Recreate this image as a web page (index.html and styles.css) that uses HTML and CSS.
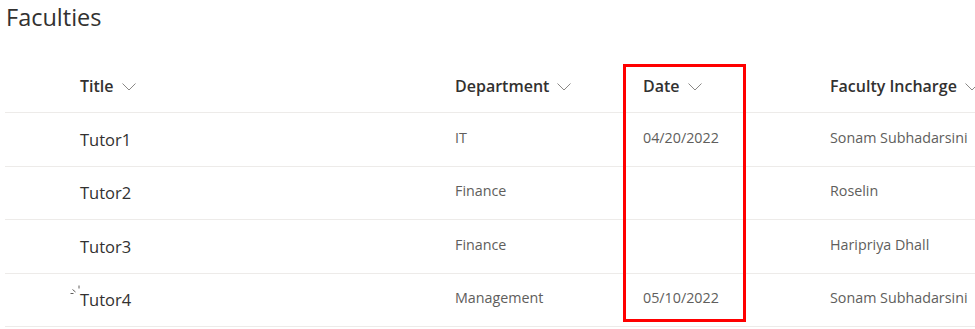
FILE: index.html
```html
<!DOCTYPE html>
<html lang="en">
<head>
    <meta charset="UTF-8">
    <meta name="viewport" content="width=device-width, initial-scale=1.0">
    <title>Faculties</title>
    <link rel="stylesheet" href="styles.css">
</head>
<body>
    <div class="page">
        <h1 class="list-title">Faculties</h1>
        <div class="list">
            <div class="row header">
                <span></span>
                <div class="col-head">Title <svg class="chev" viewBox="0 0 14 8"><path d="M0.5 0.5 L7 7 L13.5 0.5"/></svg></div>
                <div class="col-head">Department <svg class="chev" viewBox="0 0 14 8"><path d="M0.5 0.5 L7 7 L13.5 0.5"/></svg></div>
                <div class="col-head">Date <svg class="chev" viewBox="0 0 14 8"><path d="M0.5 0.5 L7 7 L13.5 0.5"/></svg></div>
                <div class="col-head">Faculty Incharge <svg class="chev" viewBox="0 0 14 8"><path d="M0.5 0.5 L7 7 L13.5 0.5"/></svg></div>
            </div>
            <div class="row">
                <span></span>
                <div class="cell title">Tutor1</div>
                <div class="cell">IT</div>
                <div class="cell">04/20/2022</div>
                <div class="cell">Sonam Subhadarsini</div>
            </div>
            <div class="row">
                <span></span>
                <div class="cell title">Tutor2</div>
                <div class="cell">Finance</div>
                <div class="cell"></div>
                <div class="cell">Roselin</div>
            </div>
            <div class="row">
                <span></span>
                <div class="cell title">Tutor3</div>
                <div class="cell">Finance</div>
                <div class="cell"></div>
                <div class="cell">Haripriya Dhall</div>
            </div>
            <div class="row">
                <span class="spin-wrap">
                    <!-- loading indicator next to the last item -->
                    <svg class="spinner" viewBox="0 0 12 12">
                        <path d="M9 0.5 V3.5"/>
                        <path d="M2.5 4.5 L5.5 7"/>
                        <path d="M0.5 8.5 H3.5"/>
                    </svg>
                </span>
                <div class="cell title">Tutor4</div>
                <div class="cell">Management</div>
                <div class="cell">05/10/2022</div>
                <div class="cell">Sonam Subhadarsini</div>
            </div>
            <div class="highlight"></div>
        </div>
    </div>
</body>
</html>
```

FILE: styles.css
```css
body {
    margin: 0;
    background: #fff;
    font-family: 'Segoe UI', 'Open Sans', sans-serif;
    color: #323130;
    overflow: hidden;
}

.page {
    width: 1000px;
}

.list-title {
    font-size: 23.5px;
    font-weight: 400;
    line-height: 34px;
    margin: 0 0 26px 6px;
    color: #323130;
}

.list {
    position: relative;
    margin-left: 5px;
}

.row {
    display: grid;
    grid-template-columns: 75px 375px 188px 187px 1fr;
    align-items: center;
    height: 52.5px;
    border-bottom: 1px solid #edebe9;
}

.row.header {
    height: 52px;
}

.col-head {
    display: flex;
    align-items: center;
    gap: 8px;
    font-size: 16px;
    font-weight: 600;
    color: #323130;
    white-space: nowrap;
}

.chev {
    width: 14px;
    height: 8px;
    margin-top: 1px;
}

.chev path {
    fill: none;
    stroke: #8a8886;
    stroke-width: 1;
}

.cell {
    font-size: 14.3px;
    color: #605e5c;
    white-space: nowrap;
    margin-top: -4px;
}

.cell.title {
    font-size: 16.5px;
    color: #323130;
    margin-top: 0;
}

.spin-wrap {
    display: flex;
    justify-content: flex-end;
    align-self: start;
    padding-top: 11px;
}

.spinner {
    width: 12px;
    height: 12px;
    margin-right: -2px;
}

.spinner path {
    fill: none;
    stroke: #605e5c;
    stroke-width: 1;
}

/* red callout around the Date column */
.highlight {
    position: absolute;
    left: 618px;
    top: 4px;
    width: 117px;
    height: 252px;
    border: 3px solid #ff0000;
}
```
